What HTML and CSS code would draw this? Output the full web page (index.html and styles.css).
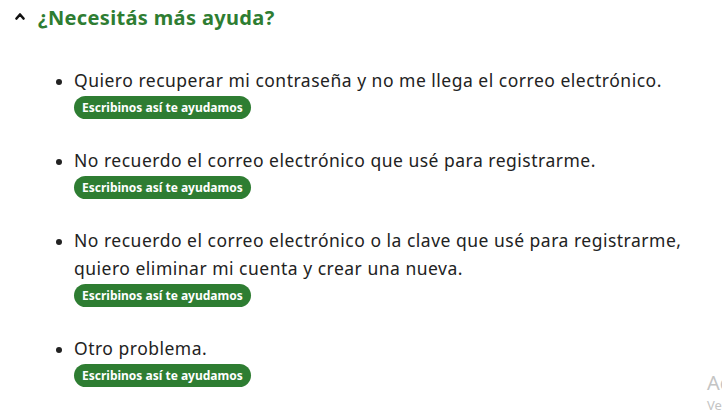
FILE: index.html
```html
<!DOCTYPE html>
<html lang="es">
<head>
<meta charset="utf-8">
<title>¿Necesitás más ayuda?</title>
<link rel="stylesheet" href="styles.css">
</head>
<body>
<section class="help">
  <h2 class="help-title">
    <svg class="chevron" width="10" height="8" viewBox="0 0 10 8" aria-hidden="true"><polyline points="1.5,6.5 5,2.5 8.5,6.5" fill="none" stroke="#111" stroke-width="2.6" stroke-linecap="round" stroke-linejoin="round"/></svg>
    <span>¿Necesitás más ayuda?</span>
  </h2>
  <ul class="help-list">
    <li class="help-item">
      <p class="help-text">Quiero recuperar mi contraseña y no me llega el correo electrónico.</p>
      <a class="help-btn" href="#">Escribinos así te ayudamos</a>
    </li>
    <li class="help-item">
      <p class="help-text">No recuerdo el correo electrónico que usé para registrarme.</p>
      <a class="help-btn" href="#">Escribinos así te ayudamos</a>
    </li>
    <li class="help-item">
      <p class="help-text">No recuerdo el correo electrónico o la clave que usé para registrarme, quiero eliminar mi cuenta y crear una nueva.</p>
      <a class="help-btn" href="#">Escribinos así te ayudamos</a>
    </li>
    <li class="help-item">
      <p class="help-text">Otro problema.</p>
      <a class="help-btn" href="#">Escribinos así te ayudamos</a>
    </li>
  </ul>
</section>
<div class="watermark">
  <div class="wm-title">Activar Windows</div>
  <div class="wm-sub">Ve a Configuración para activar Windows.</div>
</div>
</body>
</html>
```
FILE: styles.css
```css
html, body {
  margin: 0;
  padding: 0;
  background: #ffffff;
  overflow: hidden;
}
body {
  font-family: "Noto Sans", "Open Sans", sans-serif;
  color: #222222;
  width: 722px;
  height: 415px;
  position: relative;
}
.help {
  padding: 4px 0 0 15px;
}
.help-title {
  display: flex;
  align-items: center;
  gap: 13px;
  margin: 0;
  height: 26px;
  font-size: 20px;
  letter-spacing: 0.35px;
  font-weight: 700;
  color: #2e7d32;
}
.chevron {
  display: block;
  margin-top: -2px;
}
.help-list {
  list-style: disc;
  margin: 36px 0 0 0;
  padding: 0 0 0 59px;
}
.help-item {
  margin-bottom: 27px;
}
.help-text {
  margin: 0;
  font-size: 17.5px;
  letter-spacing: 0.5px;
  line-height: 28px;
  max-width: 630px;
}
.help-btn {
  display: inline-flex;
  align-items: center;
  height: 23px;
  margin-top: 2px;
  padding: 0 8px;
  border-radius: 12px;
  background: #2e7d32;
  color: #ffffff;
  font-size: 12px;
  font-weight: 700;
  text-decoration: none;
}
.watermark {
  position: absolute;
  left: 707px;
  top: 370px;
  white-space: nowrap;
  color: #c4c4c4;
  font-family: "Noto Sans", sans-serif;
}
.wm-title {
  font-size: 20px;
  line-height: 26px;
}
.wm-sub {
  font-size: 13px;
  line-height: 18px;
}
```
